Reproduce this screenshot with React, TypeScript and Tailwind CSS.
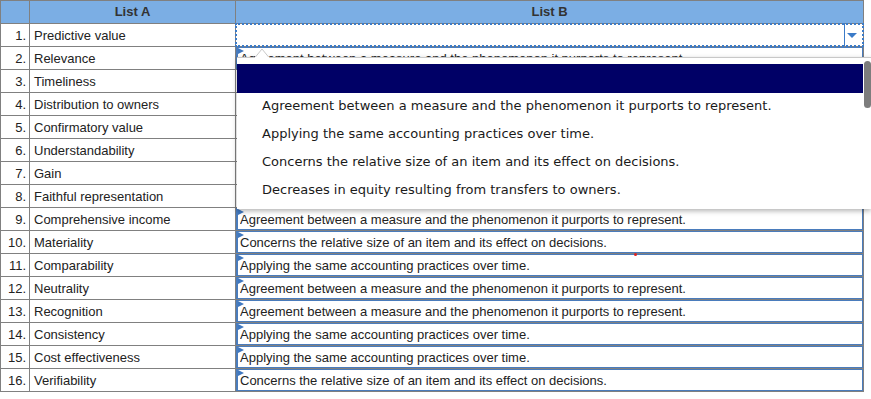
import { ReactNode } from "react";

const AGREE = "Agreement between a measure and the phenomenon it purports to represent.";
const CONCERNS = "Concerns the relative size of an item and its effect on decisions.";
const APPLYING = "Applying the same accounting practices over time.";
const DECREASES = "Decreases in equity resulting from transfers to owners.";

const rows: { term: string; answer?: string }[] = [
  { term: "Predictive value" },
  { term: "Relevance", answer: AGREE },
  { term: "Timeliness" },
  { term: "Distribution to owners" },
  { term: "Confirmatory value" },
  { term: "Understandability" },
  { term: "Gain" },
  { term: "Faithful representation" },
  { term: "Comprehensive income", answer: AGREE },
  { term: "Materiality", answer: CONCERNS },
  { term: "Comparability", answer: APPLYING },
  { term: "Neutrality", answer: AGREE },
  { term: "Recognition", answer: AGREE },
  { term: "Consistency", answer: APPLYING },
  { term: "Cost effectiveness", answer: APPLYING },
  { term: "Verifiability", answer: CONCERNS },
];

const options = [AGREE, APPLYING, CONCERNS, DECREASES];

function Flag() {
  return (
    <svg className="absolute left-0 top-0" width="6" height="6" viewBox="0 0 6 6">
      <polygon points="0,0 6,3 0,6" fill="#3f78c0" />
    </svg>
  );
}

function AnswerBox({ children }: { children: ReactNode }) {
  return (
    <div className="relative flex h-full items-center border border-l-2 border-[#4a7cbc] pl-[2px] pt-[1px]">
      <Flag />
      <span className="truncate">{children}</span>
    </div>
  );
}

function FocusedSelect() {
  return (
    <div className="relative h-full">
      <div className="absolute -inset-[1px] border-2 border-dotted border-[#3b7bc8]" />
      <div className="absolute right-[18px] -top-[1px] h-[23px] w-px bg-[#3b7bc8]" />
      <svg className="absolute right-[6px] top-[9px]" width="10" height="5" viewBox="0 0 10 5">
        <polygon points="0,0 10,0 5,5" fill="#3b7bc8" />
      </svg>
    </div>
  );
}

export default function App() {
  return (
    <div
      className="relative h-[399px] w-[871px] overflow-hidden bg-white text-[13px] text-[#222]"
      style={{ fontFamily: '"Liberation Sans", Arial, sans-serif' }}
    >
      <div className="w-[864px] border-x border-t border-[#808080]">
        <div className="grid h-[23px] grid-cols-[29px_206px_1fr] border-b border-[#808080] bg-[#7baee4] font-bold text-[#333]">
          <div className="border-r border-[#808080]" />
          <div className="flex items-center justify-center border-r border-[#808080]">List A</div>
          <div className="flex items-center justify-center">List B</div>
        </div>
        {rows.map((r, i) => (
          <div key={i} className="grid h-[23px] grid-cols-[29px_206px_1fr] border-b border-[#808080]">
            <div className="flex items-center justify-end border-r border-[#808080] pr-[3px] pt-[1px]">{i + 1}.</div>
            <div className="flex items-center border-r border-[#808080] pl-[4px] pt-[1px]">{r.term}</div>
            <div className="h-[22px]">
              {i === 0 ? <FocusedSelect /> : r.answer ? <AnswerBox>{r.answer}</AnswerBox> : null}
            </div>
          </div>
        ))}
      </div>

      {/* open dropdown list */}
      <div
        className="absolute left-[237px] top-[57px] h-[152px] w-[634px] border-t border-[#c8c8c8] bg-white pt-[6px] shadow-[0_2px_5px_rgba(0,0,0,0.3)]"
        style={{ fontFamily: '"DejaVu Sans", Verdana, sans-serif' }}
      >
        <div className="h-[29px] w-[626px] bg-[#000066]" />
        {options.map((o) => (
          <div key={o} className="flex h-[28px] w-[626px] items-center pb-[3px] pl-[25px] text-[13px] text-[#1a1a1a]">
            {o}
          </div>
        ))}
        <div className="absolute right-0 top-[3px] h-[47px] w-[7px] rounded-full bg-[#7d7d7d]" />
      </div>
      <svg className="absolute left-[255px] top-[48px]" width="14" height="10" viewBox="0 0 14 10">
        <polygon points="0,9.5 7,1 14,9.5" fill="#fff" stroke="#c8c8c8" strokeWidth="1" />
        <rect x="0" y="9" width="14" height="1" fill="#fff" />
      </svg>
      <div className="absolute left-[634px] top-[253px] h-[3px] w-[3px] rounded-full bg-[#e02020]" />
    </div>
  );
}
